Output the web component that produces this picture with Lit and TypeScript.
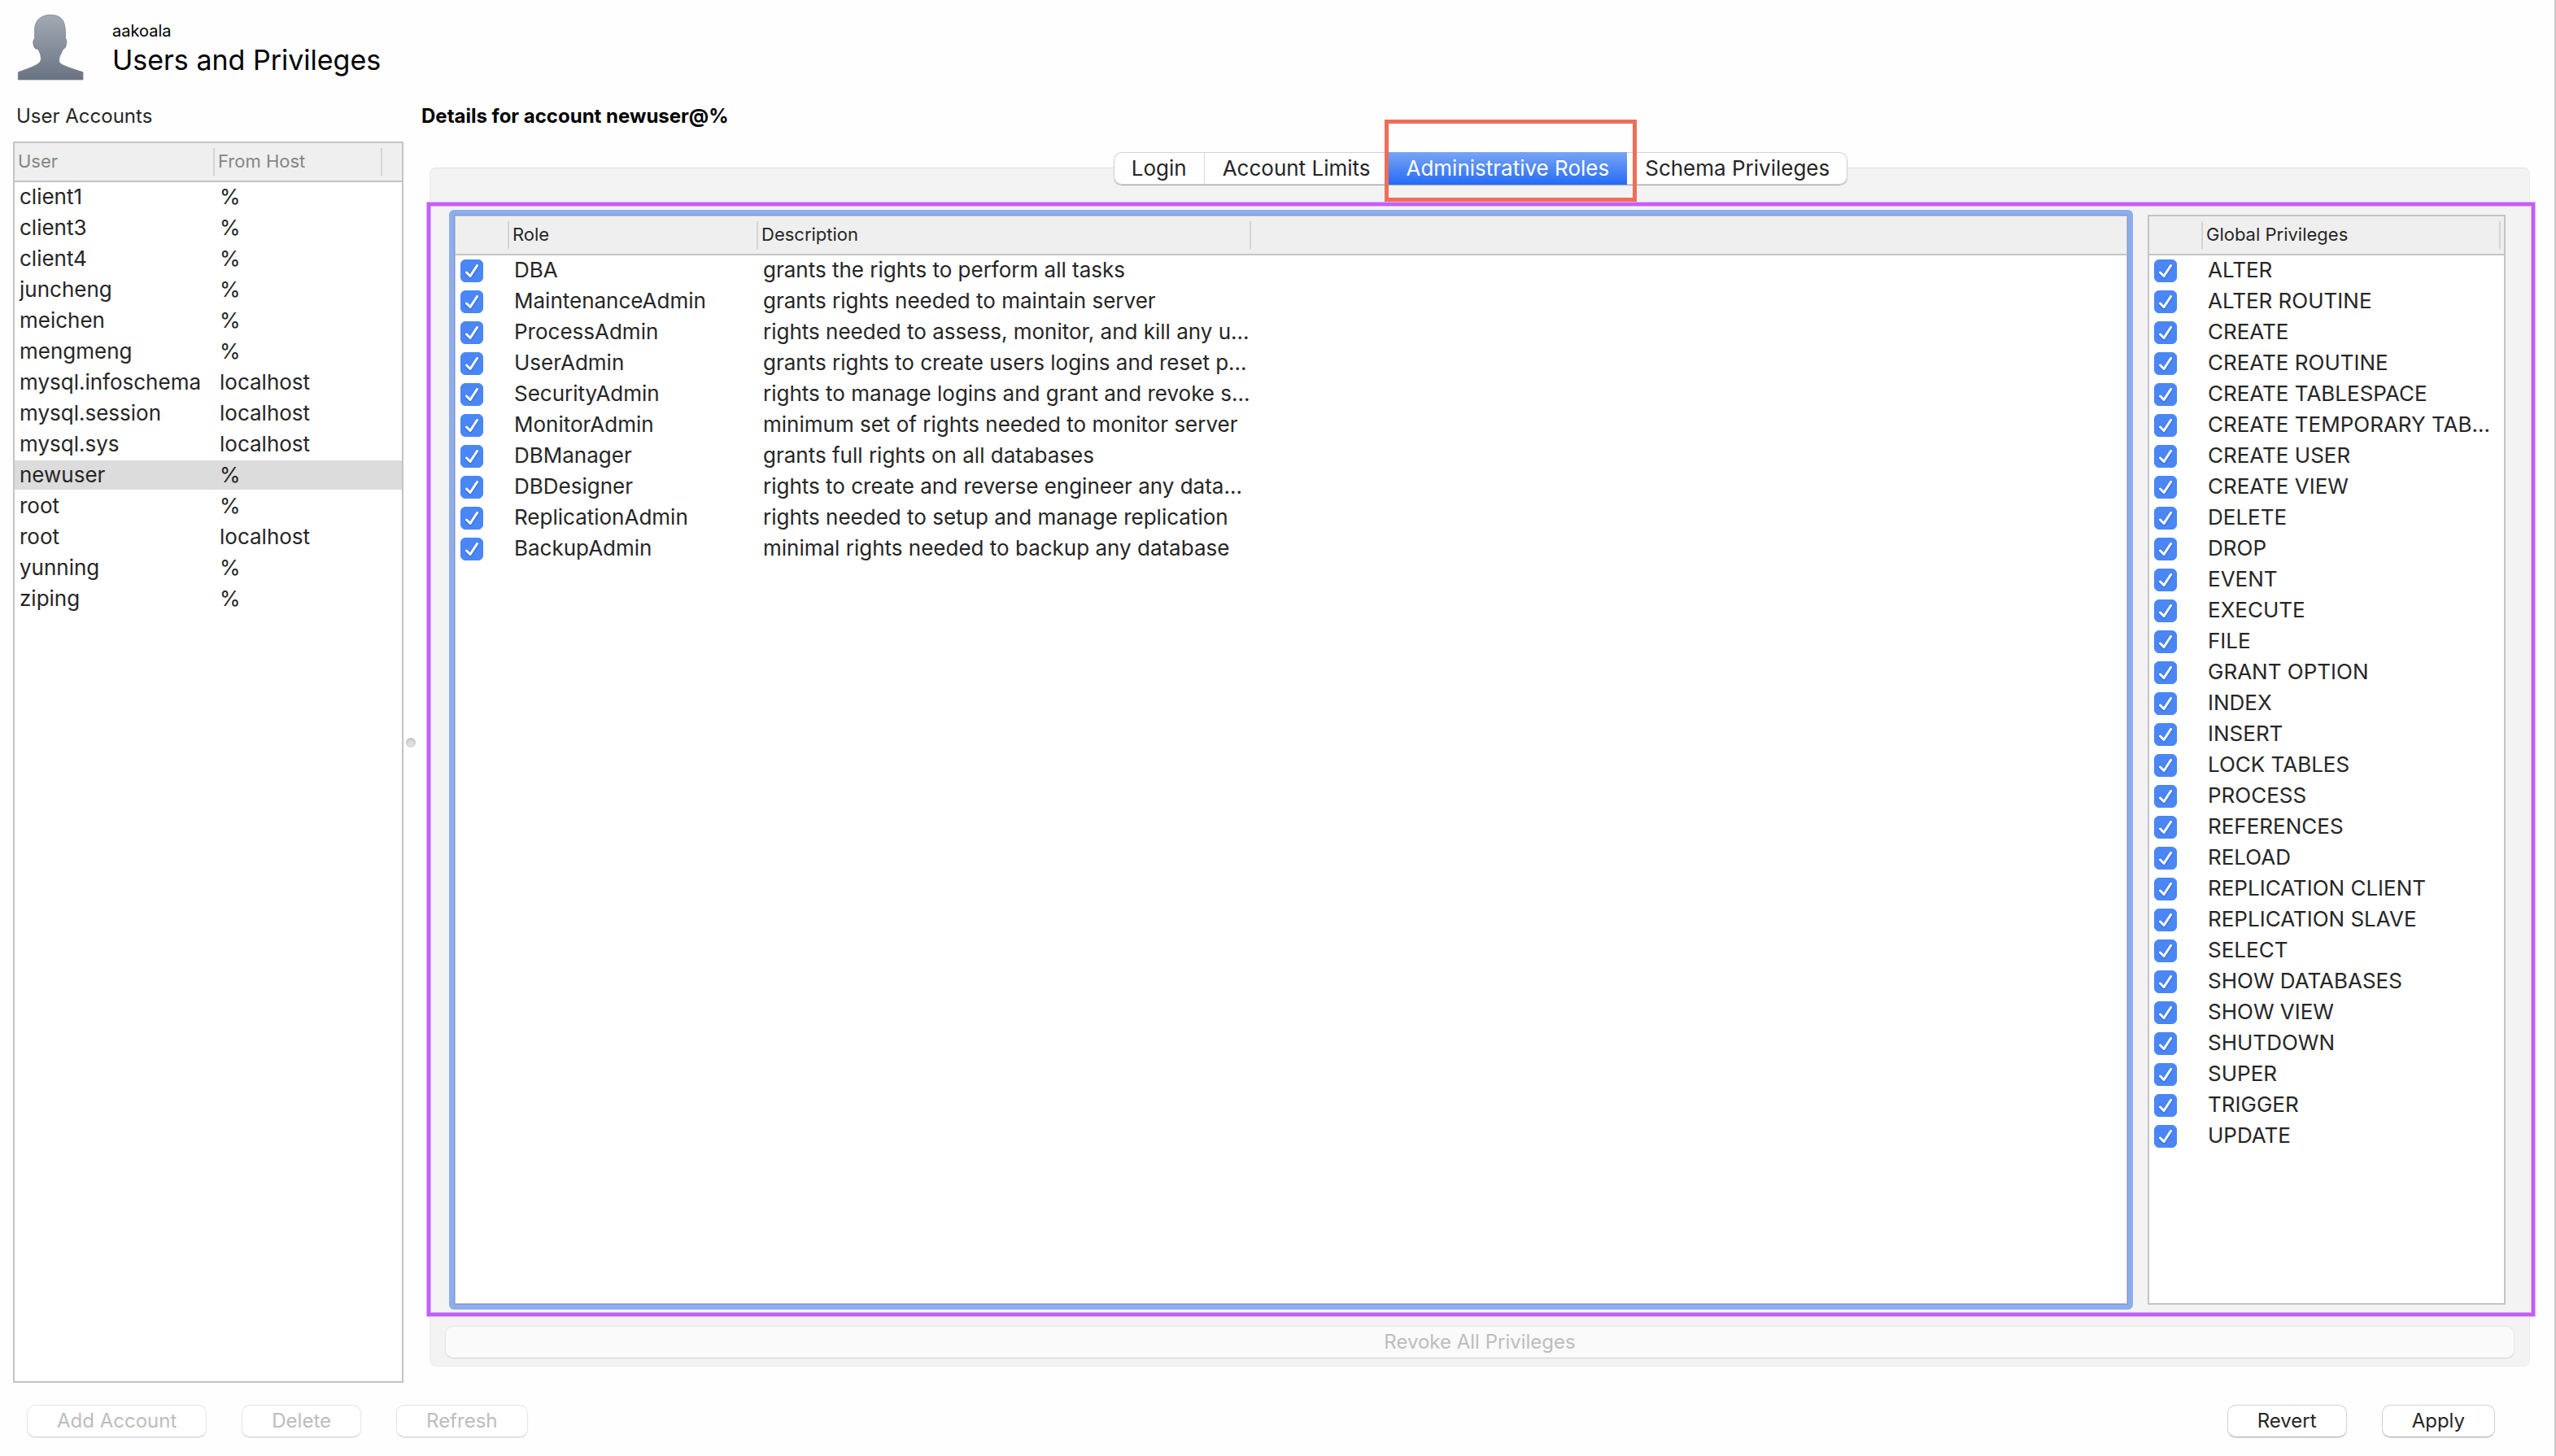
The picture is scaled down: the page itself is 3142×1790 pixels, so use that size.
import { LitElement, html, css, svg } from "lit";
import { customElement, state } from "lit/decorators.js";
import { classMap } from "lit/directives/class-map.js";

const ACCOUNTS: [string, string][] = [
  ["client1", "%"],
  ["client3", "%"],
  ["client4", "%"],
  ["juncheng", "%"],
  ["meichen", "%"],
  ["mengmeng", "%"],
  ["mysql.infoschema", "localhost"],
  ["mysql.session", "localhost"],
  ["mysql.sys", "localhost"],
  ["newuser", "%"],
  ["root", "%"],
  ["root", "localhost"],
  ["yunning", "%"],
  ["ziping", "%"],
];

const ROLES: [string, string][] = [
  ["DBA", "grants the rights to perform all tasks"],
  ["MaintenanceAdmin", "grants rights needed to maintain server"],
  ["ProcessAdmin", "rights needed to assess, monitor, and kill any u..."],
  ["UserAdmin", "grants rights to create users logins and reset p..."],
  ["SecurityAdmin", "rights to manage logins and grant and revoke s..."],
  ["MonitorAdmin", "minimum set of rights needed to monitor server"],
  ["DBManager", "grants full rights on all databases"],
  ["DBDesigner", "rights to create and reverse engineer any data..."],
  ["ReplicationAdmin", "rights needed to setup and manage replication"],
  ["BackupAdmin", "minimal rights needed to backup any database"],
];

const PRIVILEGES = [
  "ALTER", "ALTER ROUTINE", "CREATE", "CREATE ROUTINE", "CREATE TABLESPACE",
  "CREATE TEMPORARY TAB...", "CREATE USER", "CREATE VIEW", "DELETE", "DROP",
  "EVENT", "EXECUTE", "FILE", "GRANT OPTION", "INDEX", "INSERT", "LOCK TABLES",
  "PROCESS", "REFERENCES", "RELOAD", "REPLICATION CLIENT", "REPLICATION SLAVE",
  "SELECT", "SHOW DATABASES", "SHOW VIEW", "SHUTDOWN", "SUPER", "TRIGGER", "UPDATE",
];

const TABS = ["Login", "Account Limits", "Administrative Roles", "Schema Privileges"];

const checkMark = svg`<path d="M7.5 16 L12 20.5 L20.5 7.5" fill="none" stroke="#fff" stroke-width="3" stroke-linecap="round" stroke-linejoin="round"/>`;

@customElement("app-root")
export class AppRoot extends LitElement {
  @state() private account = 9;
  @state() private tab = 2;

  static styles = css`
    :host {
      display: flex;
      flex-direction: column;
      box-sizing: border-box;
      min-height: 100vh;
      border-right: 2px solid #c9c9c9;
      background: #fefefe;
      color: #262626;
      font-family: Inter, "Liberation Sans", sans-serif;
      font-size: 26px;
    }
    * {
      box-sizing: border-box;
    }
    button {
      font: inherit;
      color: inherit;
      margin: 0;
    }
    h1, h2, p {
      margin: 0;
      font-weight: 400;
    }
    .header {
      display: flex;
      gap: 34px;
      padding: 17px 20px 27px;
      color: #000;
    }
    .avatar {
      display: block;
      width: 84px;
      height: 82px;
    }
    .heading {
      padding-top: 9px;
    }
    .connection {
      font-size: 20px;
      line-height: 24px;
      margin-bottom: 2px;
    }
    .title {
      font-size: 34px;
      line-height: 44px;
    }
    .body {
      display: flex;
      flex: 1;
    }
    .sidebar {
      display: flex;
      flex-direction: column;
      width: 480px;
      margin-left: 16px;
    }
    .caption {
      font-size: 24px;
      line-height: 34px;
      padding-left: 4px;
    }
    .sidebar .caption {
      margin-bottom: 14px;
    }
    .splitter {
      display: flex;
      align-items: center;
      justify-content: center;
      width: 18px;
    }
    .grip {
      width: 12px;
      height: 12px;
      border-radius: 50%;
      background: radial-gradient(circle at 50% 65%, #dedede 30%, #b0b0b0);
    }
    .details {
      display: flex;
      flex-direction: column;
      flex: 1;
      min-width: 0;
      padding-bottom: 20px;
    }
    .details .caption {
      font-weight: 700;
      color: #000;
      margin-bottom: 27px;
    }
    .tabs {
      display: flex;
      justify-content: center;
      margin: 0 28px -21px 14px;
      position: relative;
      z-index: 1;
    }
    .segments {
      display: flex;
      height: 40px;
      border-radius: 10px;
      background: #fff;
      box-shadow: 0 0 0 1px #d2d2d2 inset, 0 1px 1px #a8a8a8;
    }
    .tab {
      position: relative;
      padding: 0 22px;
      border: 0;
      background: linear-gradient(#dcdcdc, #dcdcdc) right center / 1px 38px no-repeat;
      line-height: 40px;
    }
    .tab:last-child {
      background: none;
    }
    .tab.selected {
      color: #fff;
      background: linear-gradient(#78a5f5, #256bf6);
    }
    .tab-mark {
      position: absolute;
      inset: -40px -12px -21px -4px;
      border: 5px solid #ee6e59;
      pointer-events: none;
    }
    .panel {
      display: flex;
      flex-direction: column;
      flex: 1;
      margin: 0 30px 0 14px;
      border: 1px solid #ebebeb;
      border-top-color: #e0e0e0;
      border-radius: 8px;
      background: #f3f3f3;
    }
    .frame {
      display: flex;
      gap: 18px;
      flex: 1;
      margin: 42px -7px 12px -4px;
      padding: 5px 32px 4px 23px;
      border: 4px solid #c35ff6;
      outline: 1px solid #dfaef8;
      box-shadow: 0 0 0 1px #dfaef8 inset;
    }
    .focus-ring {
      display: flex;
      flex: 1;
      min-width: 0;
      border: 6px solid #8daeee;
      border-radius: 6px;
      background: #7b98d8;
      padding: 1px;
    }
    .list {
      flex: 1;
      min-width: 0;
      border: 2px solid #c4c4c4;
      background: #fff;
    }
    .focus-ring .list {
      border-width: 1px;
    }
    .privileges {
      flex: none;
      width: 440px;
      margin: 6px 0;
    }
    table {
      width: 100%;
      table-layout: fixed;
      border-collapse: separate;
      border-spacing: 0;
    }
    th {
      height: 48px;
      padding: 0 0 2px 4px;
      border-bottom: 2px solid #c4c4c4;
      background: linear-gradient(#d4d4d4, #d4d4d4) right center / 2px 34px no-repeat #efefef;
      font-size: 22px;
      font-weight: 400;
      line-height: 44px;
      text-align: left;
      white-space: nowrap;
    }
    th:last-child {
      padding: 0;
      background: #efefef;
    }
    .sidebar th {
      color: #868686;
    }
    td {
      height: 38px;
      padding: 0 0 0 6px;
      border-bottom: 2px solid transparent;
      background-clip: padding-box;
      line-height: 36px;
      white-space: nowrap;
    }
    td:last-child {
      padding: 0;
    }
    td label {
      display: block;
    }
    .selected-row td {
      background-color: #dcdcdc;
    }
    .user-col { width: 246px; }
    .host-col { width: 206px; }
    .check-col { width: 66px; }
    .role-col { width: 306px; }
    .desc-col { width: 606px; }
    .edge-col { width: 4px; }
    .check {
      display: grid;
      width: 28px;
      height: 28px;
      margin: 5px 0 3px;
    }
    .check > * {
      grid-area: 1 / 1;
    }
    .check input {
      appearance: none;
      width: 28px;
      height: 28px;
      margin: 0;
      border: 1px solid #b8b8b8;
      border-radius: 6px;
      background: #fff;
    }
    .check input:checked {
      border-color: #4884f3;
      background: #4a87f5;
    }
    .check svg {
      width: 28px;
      height: 28px;
      pointer-events: none;
      filter: drop-shadow(0 1px 1px #2c5fc4);
    }
    .check input:not(:checked) + svg {
      visibility: hidden;
    }
    .button {
      height: 40px;
      padding: 0 36px;
      border: 1px solid #d4d4d4;
      border-bottom-color: #b9b9b9;
      border-radius: 10px;
      background: #fff;
      box-shadow: 0 1px 1px #dedede;
      font-size: 24px;
      line-height: 38px;
    }
    .button:disabled {
      color: #bdbdbd;
      border-color: #e6e6e6;
      border-bottom-color: #d6d6d6;
      box-shadow: 0 1px 1px #ececec;
    }
    .button.revoke {
      margin: 0 18px 9px;
      background: #fafafa;
    }
    .footer {
      display: flex;
      justify-content: space-between;
      padding: 27px 73px 23px 33px;
    }
    .actions {
      display: flex;
      gap: 43px;
    }
  `;

  private renderCheck(id: string) {
    return html`<div class="check">
      <input type="checkbox" id=${id} checked />
      <svg viewBox="0 0 28 28" aria-hidden="true">${checkMark}</svg>
    </div>`;
  }

  render() {
    return html`
      <header class="header">
        <svg class="avatar" viewBox="30 26 252 246" aria-hidden="true">
          <defs>
            <linearGradient id="skin" x1="0" y1="0" x2="0" y2="1">
              <stop offset="0" stop-color="#a3aab5" />
              <stop offset="1" stop-color="#697382" />
            </linearGradient>
          </defs>
          <path
            d="M155 30C124 30 101 48 98 78L98 118C91 121 91 135 96 149C99 156 105 155 111 157C114 166 121 174 121 190C121 202 116 207 104 214C82 226 58 233 37 241L37 269L276 269L276 241C253 233 225 226 203 215C191 209 188 204 188 196C188 178 199 170 202 157C209 155 213 148 215 137C217 124 215 120 211 117C212 98 212 84 208 66C202 42 186 30 155 30Z"
            fill="url(#skin)" stroke="#6f7988" stroke-width="3" stroke-opacity="0.7"
          />
        </svg>
        <div class="heading">
          <p class="connection">aakoala</p>
          <h1 class="title">Users and Privileges</h1>
        </div>
      </header>

      <main class="body">
        <section class="sidebar">
          <h2 class="caption">User Accounts</h2>
          <div class="list">
            <table>
              <colgroup><col class="user-col" /><col class="host-col" /><col /></colgroup>
              <thead><tr><th>User</th><th>From Host</th><th></th></tr></thead>
              <tbody>
                ${ACCOUNTS.map(
                  ([user, host], i) => html`<tr
                    class=${classMap({ "selected-row": i === this.account })}
                    @click=${() => (this.account = i)}
                  ><td>${user}</td><td>${host}</td><td></td></tr>`
                )}
              </tbody>
            </table>
          </div>
        </section>

        <div class="splitter"><div class="grip"></div></div>

        <section class="details">
          <h2 class="caption">Details for account newuser@%</h2>
          <div class="tabs">
            <div class="segments" role="tablist">
              ${TABS.map(
                (name, i) => html`<button
                  class=${classMap({ tab: true, selected: i === this.tab })}
                  role="tab"
                  aria-selected=${i === this.tab ? "true" : "false"}
                  @click=${() => (this.tab = i)}
                >${name}${i === 2 ? html`<span class="tab-mark"></span>` : ""}</button>`
              )}
            </div>
          </div>
          <div class="panel">
            <div class="frame">
              <div class="focus-ring">
                <div class="list">
                  <table>
                    <colgroup>
                      <col class="check-col" /><col class="role-col" /><col class="desc-col" /><col />
                    </colgroup>
                    <thead><tr><th></th><th>Role</th><th>Description</th><th></th></tr></thead>
                    <tbody>
                      ${ROLES.map(
                        ([role, text], i) => html`<tr>
                          <td>${this.renderCheck(`role-${i}`)}</td>
                          <td><label for=${`role-${i}`}>${role}</label></td>
                          <td>${text}</td>
                          <td></td>
                        </tr>`
                      )}
                    </tbody>
                  </table>
                </div>
              </div>
              <div class="list privileges">
                <table>
                  <colgroup><col class="check-col" /><col /><col class="edge-col" /></colgroup>
                  <thead><tr><th></th><th>Global Privileges</th><th></th></tr></thead>
                  <tbody>
                    ${PRIVILEGES.map(
                      (name, i) => html`<tr>
                        <td>${this.renderCheck(`priv-${i}`)}</td>
                        <td><label for=${`priv-${i}`}>${name}</label></td>
                        <td></td>
                      </tr>`
                    )}
                  </tbody>
                </table>
              </div>
            </div>
            <button class="button revoke" disabled>Revoke All Privileges</button>
          </div>
        </section>
      </main>

      <footer class="footer">
        <div class="actions">
          <button class="button" disabled>Add Account</button>
          <button class="button" disabled>Delete</button>
          <button class="button" disabled>Refresh</button>
        </div>
        <div class="actions">
          <button class="button">Revert</button>
          <button class="button">Apply</button>
        </div>
      </footer>
    `;
  }
}
